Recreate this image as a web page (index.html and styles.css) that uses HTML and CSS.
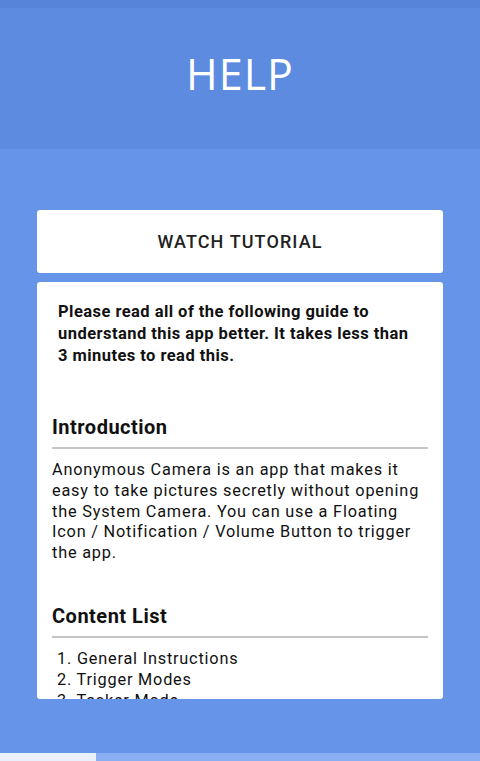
FILE: index.html
```html
<!DOCTYPE html>
<html>
<head>
<meta charset="utf-8">
<link rel="stylesheet" href="styles.css">
</head>
<body>
<div class="status"></div>
<header class="header"><h1 class="title">HELP</h1></header>
<main class="main">
  <div class="card btn-card">WATCH TUTORIAL</div>
  <div class="card guide">
    <p class="lead">Please read all of the following guide to understand this app better. It takes less than 3 minutes to read this.</p>
    <h2 class="sec">Introduction</h2>
    <p class="body">Anonymous Camera is an app that makes it easy to take pictures secretly without opening the System Camera. You can use a Floating Icon / Notification / Volume Button to trigger the app.</p>
    <h2 class="sec sec2">Content List</h2>
    <ol class="list">
      <li>1. General Instructions</li>
      <li>2. Trigger Modes</li>
      <li>3. Tasker Mode</li>
    </ol>
  </div>
</main>
<div class="tabs"><div class="tab-on"></div><div class="tab-off"></div></div>
</body>
</html>
```
FILE: styles.css
```css
* { box-sizing: border-box; }
html, body { margin: 0; padding: 0; }
body {
  width: 480px; height: 761px; overflow: hidden;
  background: #6594e9;
  font-family: Roboto, "Noto Sans", sans-serif;
  display: flex; flex-direction: column;
}
.status { height: 8px; background: #5784d8; }
.header {
  height: 141px; background: #5c8be0;
  display: flex; align-items: center; justify-content: center;
}
.title {
  margin: 0 0 10px 0;
  font-family: "Open Sans", sans-serif;
  font-weight: 400; font-size: 43px; letter-spacing: 1px;
  color: #fff;
}
.main {
  flex: 1; padding: 61px 37px 0 37px;
  display: flex; flex-direction: column; gap: 9px;
  min-height: 0;
}
.card { background: #fff; border-radius: 3px; }
.btn-card {
  height: 63px; display: flex; align-items: center; justify-content: center;
  font-size: 18px; font-weight: 500; color: #222; letter-spacing: 1.1px;
}
.guide {
  height: 417px; overflow: hidden;
  padding: 19px 15px 0 15px;
  color: #111;
}
.lead {
  margin: 0; padding: 0 6px;
  font-size: 16.5px; font-weight: 700; line-height: 22px; letter-spacing: 0.45px;
}
.sec {
  margin: 48px 0 0 0; font-size: 20px; font-weight: 700; line-height: 24px;
  padding-bottom: 8px; border-bottom: 2px solid #c4c4c4; letter-spacing: 0.5px;
}
.sec2 { margin-top: 40px; }
.body {
  margin: 11px 0 0 0; font-size: 16.3px; line-height: 20.8px; color: #111;
  letter-spacing: 0.8px;
}
.list {
  list-style: none; margin: 11px 0 0 0; padding: 0 0 0 5px;
  font-size: 16.3px; line-height: 20.8px; color: #111; letter-spacing: 0.8px;
}
.tabs { height: 8px; display: flex; margin-top: 54px; flex: none; }
.tab-on { width: 96px; background: #ebf1fc; }
.tab-off { flex: 1; background: #8aaef2; }
```
